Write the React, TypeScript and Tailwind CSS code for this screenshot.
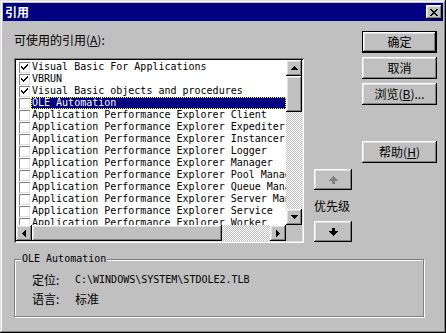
const mono = "font-['DejaVu_Sans_Mono','Liberation_Mono',monospace] text-[10px] leading-[12px]";
const cjk = "font-['Noto_Sans_CJK_SC','Noto_Sans',sans-serif] text-[12px] leading-[12px]";
const raised =
  "bg-[#c0c0c0] shadow-[inset_-1px_-1px_#000,inset_1px_1px_#fff,inset_-2px_-2px_#808080,inset_2px_2px_#dfdfdf]";
const dither =
  "bg-[repeating-conic-gradient(#ffffff_0%_25%,#c0c0c0_0%_50%)] bg-size-[2px_2px]";

const refs = [
  { t: "Visual Basic For Applications", c: true },
  { t: "VBRUN", c: true },
  { t: "Visual Basic objects and procedures", c: true },
  { t: "OLE Automation", sel: true },
  { t: "Application Performance Explorer Client" },
  { t: "Application Performance Explorer Expediter" },
  { t: "Application Performance Explorer Instancer" },
  { t: "Application Performance Explorer Logger" },
  { t: "Application Performance Explorer Manager" },
  { t: "Application Performance Explorer Pool Manager" },
  { t: "Application Performance Explorer Queue Manager" },
  { t: "Application Performance Explorer Server Manager" },
  { t: "Application Performance Explorer Service" },
  { t: "Application Performance Explorer Worker" },
];

function Check({ on }: { on?: boolean }) {
  return (
    <div className="w-[11px] h-[11px] shrink-0 bg-white shadow-[inset_1px_1px_#808080,inset_-1px_-1px_#dfdfdf] flex items-center justify-center">
      {on && (
        <svg width="7" height="7" viewBox="0 0 7 7">
          <path d="M0 2h1v1h1v1h1v-1h1v-1h1v-1h1v-1h1v2h-1v1h-1v1h-1v1h-1v1h-1v-1h-1v-1h-1z" fill="#000" />
        </svg>
      )}
    </div>
  );
}

function Arrow({ dir }: { dir: "up" | "down" | "left" | "right" }) {
  const d = {
    up: "M3 0h1v1h1v1h1v1h1v1H0V3h1V2h1V1h1z",
    down: "M0 0h7v1H6v1H5v1H4v1H3V3H2V2H1V1H0z",
    left: "M3 0h1v7H3V6H2V5H1V4H0V3h1V2h1V1h1z",
    right: "M0 0h1v1h1v1h1v1h1v1H3v1H2v1H1v1H0z",
  }[dir];
  const vert = dir === "up" || dir === "down";
  return (
    <svg width={vert ? 7 : 4} height={vert ? 4 : 7} viewBox={vert ? "0 0 7 4" : "0 0 4 7"}>
      <path d={d} fill="#000" />
    </svg>
  );
}

function ScrollBtn({ dir }: { dir: "up" | "down" | "left" | "right" }) {
  return (
    <div className={`w-[16px] h-[16px] shrink-0 flex items-center justify-center ${raised}`}>
      <Arrow dir={dir} />
    </div>
  );
}

function PriorityArrow({ up }: { up?: boolean }) {
  const fill = up ? "#808080" : "#000";
  return (
    <svg width="9" height="8" viewBox="0 0 9 8">
      {up ? (
        <path d="M4 0h1v1h1v1h1v1h1v1h1v1H6v3H3V5H0V4h1V3h1V2h1V1h1z" fill={fill} />
      ) : (
        <path d="M3 0h3v3h3v1H8v1H7v1H6v1H5v1H4V7H3V6H2V5H1V4H0V3h3z" fill={fill} />
      )}
    </svg>
  );
}

function Button({ children, def, className = "" }: { children: React.ReactNode; def?: boolean; className?: string }) {
  return (
    <div
      className={`w-[75px] h-[22px] flex items-center justify-center ${cjk} text-black ${
        def ? "border border-black" : ""
      } ${raised} ${className}`}
    >
      {children}
    </div>
  );
}

export default function App() {
  return (
    <div className="w-[446px] h-[333px] p-[3px] flex flex-col bg-[#c0c0c0] shadow-[inset_-1px_-1px_#000,inset_1px_1px_#dfdfdf,inset_-2px_-2px_#808080,inset_2px_2px_#fff] overflow-hidden">
      {/* title bar */}
      <div className="h-[18px] shrink-0 bg-[#000080] flex items-center justify-between pl-[2px] pr-[1px]">
        <span className={`${cjk} font-bold text-white`}>引用</span>
        <div className={`w-[16px] h-[14px] flex items-center justify-center ${raised}`}>
          <svg width="8" height="7" viewBox="0 0 8 7">
            <path d="M0 0h2v1h1v1h2V1h1V0h2v1H7v1H6v1H5v1h1v1h1v1h1v1H6V6H5V5H3v1H2v1H0V6h1V5h1V4h1V3H2V2H1V1H0z" fill="#000" />
          </svg>
        </div>
      </div>

      <div className="pl-[11px] pt-[10px] flex flex-col">
        <div className="flex">
          {/* list column */}
          <div className="flex flex-col w-[290px]">
            <div className={`${cjk} text-black mt-[3px]`}>
              可使用的引用(<span className="underline">A</span>):
            </div>
            <div className="mt-[12px] h-[185px] p-[2px] bg-white shadow-[inset_1px_1px_#808080,inset_-1px_-1px_#fff,inset_2px_2px_#000,inset_-2px_-2px_#dfdfdf] flex flex-col">
              <div className="flex h-[165px]">
                <div className="flex-1 overflow-hidden pt-[1px] bg-white">
                  {refs.map((r) => (
                    <div key={r.t} className="flex items-center h-[12px] pl-[3px]">
                      <Check on={r.c} />
                      <div
                        className={`ml-[1px] flex-1 h-[12px] pl-[1px] whitespace-nowrap overflow-hidden ${mono} ${
                          r.sel
                            ? "bg-[#000080] text-white outline outline-1 outline-dotted outline-[#ffff00] -outline-offset-1"
                            : "text-black"
                        }`}
                      >
                        {r.t}
                      </div>
                    </div>
                  ))}
                </div>
                <div className="w-[16px] flex flex-col">
                  <ScrollBtn dir="up" />
                  <div className={`h-[36px] ${raised}`} />
                  <div className={`flex-1 ${dither}`} />
                  <ScrollBtn dir="down" />
                </div>
              </div>
              <div className="flex h-[16px]">
                <ScrollBtn dir="left" />
                <div className={`w-[190px] ${raised}`} />
                <div className={`flex-1 ${dither}`} />
                <ScrollBtn dir="right" />
                <div className="w-[16px] bg-[#c0c0c0]" />
              </div>
            </div>
          </div>

          {/* priority column */}
          <div className="ml-[10px] w-[38px] flex flex-col">
            <div className={`mt-[138px] h-[21px] flex items-center justify-center ${raised}`}>
              <PriorityArrow up />
            </div>
            <div className={`${cjk} text-black mt-[10px]`}>优先级</div>
            <div className={`mt-[9px] h-[21px] flex items-center justify-center ${raised}`}>
              <PriorityArrow />
            </div>
          </div>

          {/* buttons column */}
          <div className="ml-[10px] flex flex-col">
            <Button def>确定</Button>
            <Button className="mt-[4px]">取消</Button>
            <Button className="mt-[4px]">
              浏览(<span className="underline">B</span>)...
            </Button>
            <Button className="mt-[36px]">
              帮助(<span className="underline">H</span>)
            </Button>
          </div>
        </div>

        {/* group box */}
        <div className="relative mt-[16px] w-[410px] h-[58px] border border-[#808080] shadow-[inset_1px_1px_#fff,1px_1px_#fff] pt-[14px] pl-[17px]">
          <div className={`absolute -top-[7px] left-[6px] px-[1px] bg-[#c0c0c0] text-black ${mono}`}>OLE Automation</div>
          <div className="flex items-center h-[12px]">
            <span className={`${cjk} w-[43px] text-black`}>定位:</span>
            <span className={`${mono} text-black`}>C:\WINDOWS\SYSTEM\STDOLE2.TLB</span>
          </div>
          <div className="flex items-center h-[12px] mt-[7px]">
            <span className={`${cjk} w-[43px] text-black`}>语言:</span>
            <span className={`${cjk} text-black`}>标准</span>
          </div>
        </div>
      </div>
    </div>
  );
}
